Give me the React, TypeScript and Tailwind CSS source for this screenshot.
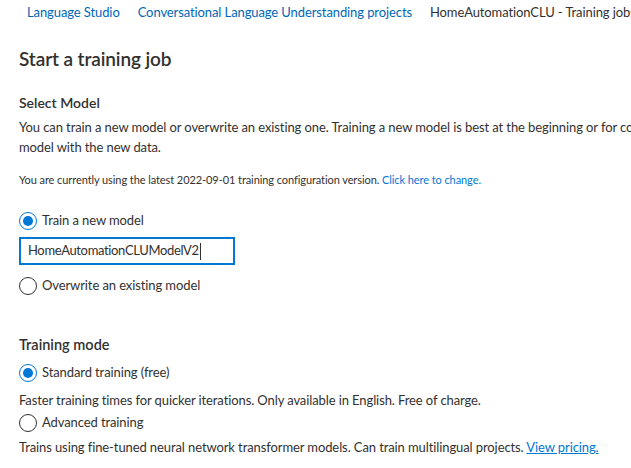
import React from 'react';

const Radio: React.FC<{ checked?: boolean; label: string }> = ({ checked, label }) => (
  <label className="flex h-[20px] items-center gap-[5px] text-[13px] tracking-[-0.1px] text-[#323130]">
    <span
      className={
        checked
          ? 'flex h-[18px] w-[18px] items-center justify-center rounded-full border border-[#0078d4]'
          : 'flex h-[18px] w-[18px] items-center justify-center rounded-full border border-[#323130]'
      }
    >
      {checked && <span className="h-[10px] w-[10px] rounded-full bg-[#0078d4]" />}
    </span>
    {label}
  </label>
);

const Chevron = () => (
  <svg width="6" height="10" viewBox="0 0 6 10" className="ml-[10px] mr-[8px]">
    <path d="M0.5 0.5 L5 5 L0.5 9.5" fill="none" stroke="#8a8886" strokeWidth="1" />
  </svg>
);

export default function App() {
  return (
    <div
      className="h-[468px] w-full overflow-hidden whitespace-nowrap bg-white text-[#323130]"
      style={{ fontFamily: 'Lato, "Open Sans", sans-serif' }}
    >
      <nav className="flex h-[26px] items-center pl-[27px] text-[13px] tracking-[-0.1px]">
        <a className="text-[#0067b8]">Language Studio</a>
        <Chevron />
        <a className="text-[#0067b8]">Conversational Language Understanding projects</a>
        <Chevron />
        <span>HomeAutomationCLU - Training jobs</span>
      </nav>

      <div className="pl-[19px]">
        <h1 className="mt-[20px] text-[19px] font-semibold leading-[26px] tracking-[-0.1px]">Start a training job</h1>

        <h2 className="mt-[21px] text-[14px] font-semibold leading-[20px]">Select Model</h2>
        <p className="mt-[4px] text-[13px] leading-[20px] tracking-[-0.1px]">
          You can train a new model or overwrite an existing one. Training a new model is best at the beginning or for
          course corrections.
          <br />
          model with the new data.
        </p>

        <p className="mt-[15px] text-[11px] leading-[16px] tracking-[-0.08px]">
          You are currently using the latest 2022-09-01 training configuration version.{' '}
          <a className="text-[#0078d4]">Click here to change.</a>
        </p>

        <div className="mt-[23px]">
          <Radio checked label="Train a new model" />
        </div>
        <div className="mt-[6px] flex h-[28px] w-[216px] items-center border-2 border-[#0078d4] px-[7px] text-[13px] tracking-[-0.35px]">
          HomeAutomationCLUModelV2
          <span className="ml-[1px] h-[17px] w-[1px] bg-[#323130]" />
        </div>
        <div className="mt-[11px]">
          <Radio label="Overwrite an existing model" />
        </div>

        <h2 className="mt-[39px] text-[14.5px] font-semibold leading-[20px]">Training mode</h2>
        <div className="mt-[8px]">
          <Radio checked label="Standard training (free)" />
        </div>
        <p className="mt-[7px] text-[13px] leading-[20px] tracking-[-0.1px]">
          Faster training times for quicker iterations. Only available in English. Free of charge.
        </p>
        <div className="mt-[3px]">
          <Radio label="Advanced training" />
        </div>
        <p className="mt-[4px] text-[13px] leading-[20px] tracking-[-0.1px]">
          Trains using fine-tuned neural network transformer models. Can train multilingual projects.{' '}
          <a className="text-[#0078d4] underline">View pricing.</a>
        </p>
      </div>
    </div>
  );
}
